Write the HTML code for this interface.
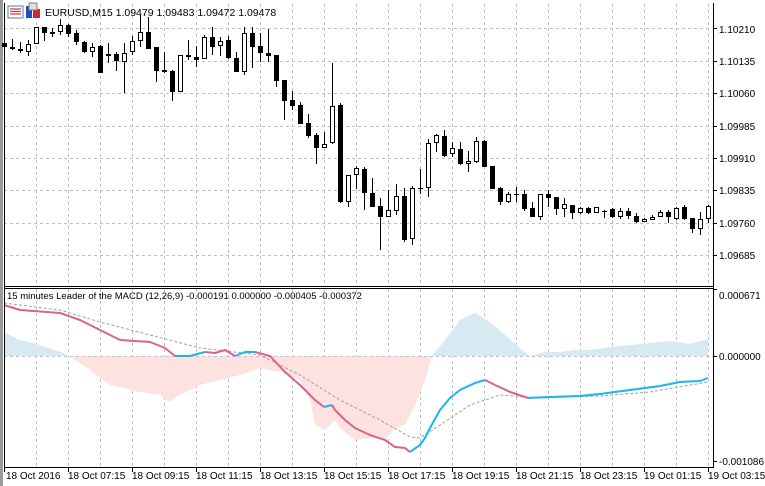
<!DOCTYPE html>
<html><head><meta charset="utf-8"><style>
html,body{margin:0;padding:0;background:#fff;width:765px;height:486px;overflow:hidden;font-family:"Liberation Sans",sans-serif}
svg{display:block}
text{font-family:"Liberation Sans",sans-serif;font-size:10px;fill:#000}
</style></head><body>
<svg width="765" height="486" viewBox="0 0 765 486" xmlns="http://www.w3.org/2000/svg">
<rect x="0" y="0" width="765" height="486" fill="#fff"/>
<rect x="0" y="0" width="3" height="486" fill="#9a9a9a"/>
<!-- grid -->
<g stroke="#c0c0c0" stroke-width="1" stroke-dasharray="3,3">
<path d="M36.5 4V286M68.5 4V286M100.5 4V286M132.5 4V286M164.5 4V286M196.5 4V286M228.5 4V286M260.5 4V286M292.5 4V286M324.5 4V286M356.5 4V286M388.5 4V286M420.5 4V286M452.5 4V286M484.5 4V286M516.5 4V286M548.5 4V286M580.5 4V286M612.5 4V286M644.5 4V286M676.5 4V286M708.5 4V286"/>
<path d="M36.5 289V467M68.5 289V467M100.5 289V467M132.5 289V467M164.5 289V467M196.5 289V467M228.5 289V467M260.5 289V467M292.5 289V467M324.5 289V467M356.5 289V467M388.5 289V467M420.5 289V467M452.5 289V467M484.5 289V467M516.5 289V467M548.5 289V467M580.5 289V467M612.5 289V467M644.5 289V467M676.5 289V467M708.5 289V467"/>
<path d="M4 28.5H713M4 61.5H713M4 93.5H713M4 126.5H713M4 158.5H713M4 190.5H713M4 223.5H713M4 255.5H713"/>
</g>
<!-- indicator areas -->
<polygon fill="#d8eaf1" points="4,356 4,332 20,340 40,345 60,352 70,356"/>
<polygon fill="#d8eaf1" points="432,356 445,340 460,320 475,313 490,322 505,335 520,348 530,356"/>
<polygon fill="#d8eaf1" points="530,356 545,352 560,352 575,350 590,350 610,347 630,345 650,343 670,341 690,344 708,339 708,356"/>
<polygon fill="#fde2df" points="70,356 90,370 110,385 140,392 160,395 170,402 180,395 200,385 220,380 240,375 260,368 280,372 300,380 310,400 315,425 325,430 335,420 340,428 355,440 370,438 385,440 395,428 405,425 415,405 425,380 432,356"/>
<path d="M4 356.5H713" stroke="#c0c0c0" stroke-dasharray="3,3"/>
<!-- signal -->
<polyline fill="none" stroke="#a0a0a0" stroke-width="1" stroke-dasharray="3,2" points="4,303 60,310 100,322 150,335 200,348 260,355 300,375 340,400 380,420 410,437 420,438 440,425 470,405 500,395 540,398 600,396 650,392 708,382"/>
<!-- macd -->
<g fill="none" stroke-width="2" stroke-linejoin="round">
<polyline stroke="#d9628f" points="4,305 20,310 60,313 80,320 100,330 120,340 150,342 165,348 175,356"/>
<polyline stroke="#1ab4f0" points="175,356 190,356 205,352"/>
<polyline stroke="#d9628f" points="205,352 215,353 225,350 235,356"/>
<polyline stroke="#1ab4f0" points="235,356 245,352 255,352"/>
<polyline stroke="#d9628f" points="255,352 270,356 285,372 300,385 315,400 324,407"/>
<polyline stroke="#1ab4f0" points="324,407 332,405"/>
<polyline stroke="#d9628f" points="332,405 335,410 345,420 355,428 370,435 385,440 395,447 405,448 410,452"/>
<polyline stroke="#1ab4f0" points="410,452 420,445 425,438 430,428 440,410 450,398 460,390 475,383 485,380"/>
<polyline stroke="#d9628f" points="485,380 495,385 510,392 528,398"/>
<polyline stroke="#1ab4f0" points="528,398 550,397 580,396 600,394 630,390 660,386 680,382 700,381 708,378"/>
</g>
<!-- candles -->
<g stroke="#000" stroke-width="1" shape-rendering="crispEdges">
<path d="M4.5 40V50M12.5 39V50M20.5 42V53M28.5 40V56M36.5 27V44M44.5 27V41M52.5 28V37M60.5 19V35M68.5 24V37M76.5 30V45M84.5 41V53M92.5 43V57M100.5 45V73M108.5 43V63M116.5 52V71M124.5 43V93M132.5 36V55M140.5 15V47M148.5 17V49M156.5 47V82M164.5 52V73M172.5 70V101M180.5 55V92M188.5 40V60M196.5 46V67M204.5 35V59M212.5 27V55M220.5 37V56M228.5 36V59M236.5 52V72M244.5 27V75M252.5 27V68M260.5 33V62M268.5 29V62M276.5 55V87M284.5 80V120M292.5 91V110M300.5 102V124M308.5 114V138M316.5 133V164M324.5 132V148M332.5 63V144M340.5 103V203M348.5 175V207M356.5 166V189M364.5 167V210M372.5 178V207M380.5 198V250M388.5 190V216M396.5 184V215M404.5 188V242M412.5 186V245M420.5 169V194M428.5 139V197M436.5 134V152M444.5 130V157M452.5 142V157M460.5 142V165M468.5 151V172M476.5 137V163M484.5 140V167M492.5 166V189M500.5 187V205M508.5 192V203M516.5 187V202M524.5 190V211M532.5 202V217M540.5 194V220M548.5 190V207M556.5 197V215M564.5 198V217M572.5 205V219M580.5 207V214M588.5 207V214M596.5 207V213M604.5 210V218M612.5 208V218M620.5 208V219M628.5 208V219M636.5 213V223M644.5 218V222M652.5 215V220M660.5 210V217M668.5 210V223M676.5 207V220M684.5 205V220M692.5 218V233M700.5 212V235M708.5 205V223"/>
</g>
<g fill="#000" shape-rendering="crispEdges">
<rect x="2" y="43" width="5" height="4"/><rect x="10" y="47" width="5" height="2"/><rect x="18" y="49" width="5" height="2"/>
<rect x="42" y="27" width="5" height="6"/><rect x="50" y="32" width="5" height="2"/><rect x="66" y="25" width="5" height="9"/>
<rect x="74" y="33" width="5" height="9"/><rect x="82" y="42" width="5" height="10"/><rect x="98" y="46" width="5" height="27"/>
<rect x="106" y="54" width="5" height="2"/><rect x="114" y="54" width="5" height="7"/><rect x="146" y="32" width="5" height="17"/>
<rect x="154" y="47" width="5" height="24"/><rect x="162" y="70" width="5" height="2"/><rect x="170" y="71" width="5" height="21"/>
<rect x="186" y="55" width="5" height="2"/><rect x="194" y="57" width="5" height="3"/><rect x="210" y="37" width="5" height="10"/>
<rect x="226" y="40" width="5" height="18"/><rect x="234" y="58" width="5" height="14"/><rect x="250" y="33" width="5" height="14"/>
<rect x="258" y="46" width="5" height="7"/><rect x="266" y="53" width="5" height="3"/><rect x="274" y="55" width="5" height="26"/>
<rect x="282" y="80" width="5" height="21"/><rect x="290" y="100" width="5" height="6"/><rect x="298" y="105" width="5" height="19"/>
<rect x="306" y="123" width="5" height="13"/><rect x="314" y="135" width="5" height="13"/><rect x="338" y="105" width="5" height="97"/>
<rect x="362" y="169" width="5" height="24"/><rect x="370" y="193" width="5" height="14"/><rect x="378" y="206" width="5" height="11"/>
<rect x="402" y="196" width="5" height="44"/><rect x="418" y="188" width="5" height="1"/><rect x="442" y="136" width="5" height="20"/>
<rect x="458" y="149" width="5" height="15"/><rect x="482" y="141" width="5" height="26"/><rect x="490" y="166" width="5" height="23"/>
<rect x="498" y="188" width="5" height="14"/><rect x="514" y="194" width="5" height="1"/><rect x="522" y="194" width="5" height="15"/>
<rect x="530" y="208" width="5" height="9"/><rect x="546" y="194" width="5" height="4"/><rect x="554" y="197" width="5" height="12"/>
<rect x="570" y="205" width="5" height="8"/><rect x="586" y="208" width="5" height="5"/><rect x="602" y="211" width="5" height="1"/>
<rect x="610" y="209" width="5" height="8"/><rect x="626" y="211" width="5" height="5"/><rect x="634" y="216" width="5" height="6"/>
<rect x="666" y="212" width="5" height="5"/><rect x="682" y="207" width="5" height="12"/><rect x="690" y="218" width="5" height="11"/>
</g>
<g fill="#fff" stroke="#000" stroke-width="1" shape-rendering="crispEdges">
<rect x="26.5" y="44.5" width="4" height="7"/><rect x="34.5" y="27.5" width="4" height="16"/><rect x="58.5" y="25.5" width="4" height="6"/>
<rect x="90.5" y="47.5" width="4" height="4"/><rect x="122.5" y="53.5" width="4" height="8"/><rect x="130.5" y="41.5" width="4" height="10"/>
<rect x="138.5" y="32.5" width="4" height="8"/><rect x="178.5" y="55.5" width="4" height="36"/><rect x="202.5" y="37.5" width="4" height="21"/>
<rect x="218.5" y="41.5" width="4" height="4"/><rect x="242.5" y="33.5" width="4" height="38"/><rect x="322.5" y="144.5" width="4" height="3"/>
<rect x="330.5" y="106.5" width="4" height="36"/><rect x="346.5" y="175.5" width="4" height="26"/><rect x="354.5" y="168.5" width="4" height="6"/>
<rect x="386.5" y="210.5" width="4" height="6"/><rect x="394.5" y="196.5" width="4" height="14"/><rect x="410.5" y="188.5" width="4" height="50"/>
<rect x="426.5" y="143.5" width="4" height="44"/><rect x="434.5" y="135.5" width="4" height="7"/><rect x="450.5" y="148.5" width="4" height="5"/>
<rect x="466.5" y="161.5" width="4" height="2"/><rect x="474.5" y="141.5" width="4" height="20"/><rect x="506.5" y="194.5" width="4" height="7"/>
<rect x="538.5" y="194.5" width="4" height="22"/><rect x="562.5" y="204.5" width="4" height="4"/><rect x="578.5" y="208.5" width="4" height="4"/>
<rect x="594.5" y="207.5" width="4" height="5"/><rect x="618.5" y="211.5" width="4" height="5"/><rect x="642.5" y="219.5" width="4" height="2"/>
<rect x="650.5" y="217.5" width="4" height="2"/><rect x="658.5" y="212.5" width="4" height="4"/><rect x="674.5" y="208.5" width="4" height="10"/>
<rect x="698.5" y="219.5" width="4" height="9"/><rect x="706.5" y="206.5" width="4" height="12"/>
</g>
<!-- frames -->
<g fill="none" stroke="#000" stroke-width="1" shape-rendering="crispEdges">
<path d="M4.5 3V467.5H714"/>
<path d="M713.5 3V467.5"/>
<path d="M4 286.5H714M4 288.5H714"/>
</g>
<!-- right axis ticks -->
<g stroke="#000" shape-rendering="crispEdges">
<path d="M713 28.5H717M713 61.5H717M713 93.5H717M713 126.5H717M713 158.5H717M713 190.5H717M713 223.5H717M713 255.5H717M713 289.5H717M713 356.5H717M713 461.5H717"/>
<path d="M4.5 467V472M68.5 467V472M132.5 467V472M196.5 467V472M260.5 467V472M324.5 467V472M388.5 467V472M452.5 467V472M516.5 467V472M580.5 467V472M644.5 467V472M708.5 467V472"/>
</g>
<g>
<text x="719" y="33">1.10210</text><text x="719" y="65">1.10135</text><text x="719" y="97">1.10060</text>
<text x="719" y="130">1.09985</text><text x="719" y="162">1.09910</text><text x="719" y="194">1.09835</text>
<text x="719" y="227">1.09760</text><text x="719" y="259">1.09685</text>
<text x="719" y="299">0.000671</text><text x="719" y="360">0.000000</text><text x="719" y="465">-0.001086</text>
</g>
<g>
<text x="6" y="479">18 Oct 2016</text><text x="68" y="479">18 Oct 07:15</text><text x="132" y="479">18 Oct 09:15</text>
<text x="196" y="479">18 Oct 11:15</text><text x="260" y="479">18 Oct 13:15</text><text x="324" y="479">18 Oct 15:15</text>
<text x="388" y="479">18 Oct 17:15</text><text x="452" y="479">18 Oct 19:15</text><text x="516" y="479">18 Oct 21:15</text>
<text x="580" y="479">18 Oct 23:15</text><text x="644" y="479">19 Oct 01:15</text><text x="708" y="479">19 Oct 03:15</text>
</g>
<!-- title -->
<rect x="8" y="6" width="15" height="12" fill="#fff" stroke="#5a7ab8"/>
<path d="M10 9h11M10 11.5h11M10 14h11" stroke="#d04040" stroke-width="1.2"/>
<rect x="26" y="6" width="6" height="12" fill="#2050c0"/>
<rect x="33" y="9" width="7" height="9" fill="#c03030"/>
<rect x="29" y="3" width="8" height="7" fill="#e0e0e0" stroke="#808080"/>
<text x="45" y="16" style="font-size:10.5px">EURUSD,M15  1.09479 1.09483 1.09472 1.09478</text>
<text x="7" y="299" style="font-size:9.5px">15 minutes Leader of the MACD (12,26,9) -0.000191 0.000000 -0.000405 -0.000372</text>
</svg>
</body></html>
